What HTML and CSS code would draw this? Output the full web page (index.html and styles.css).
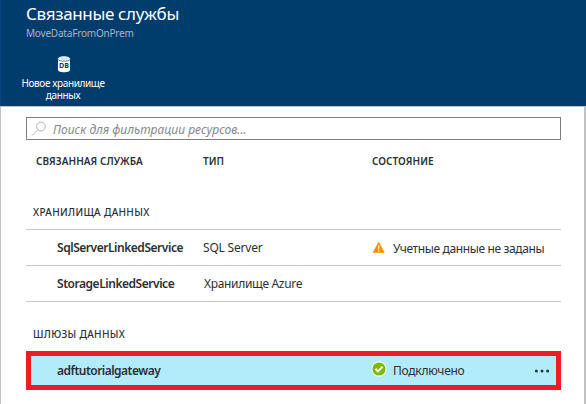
FILE: index.html
```
<!DOCTYPE html>
<html lang="ru">
<head>
<meta charset="utf-8">
<title>Связанные службы</title>
<link rel="stylesheet" href="styles.css">
</head>
<body>
<header class="header">
  <h1 class="title">Связанные службы</h1>
  <div class="subtitle">MoveDataFromOnPrem</div>
  <div class="command">
    <svg class="db" width="14" height="17" viewBox="0 0 14 17"><path d="M1 3v11c0 3 12 3 12 0V3z" fill="#fff"/><ellipse cx="7" cy="2.8" rx="5.7" ry="2" fill="#dce5ee" stroke="#fff"/><path d="M1 3.5c1 2.2 11 2.2 12 0" fill="none" stroke="#4c779c" stroke-width=".9"/><text x="7" y="11.8" text-anchor="middle" class="db-text">DB</text></svg>
    <div class="label">Новое хранилище<br>данных</div>
  </div>
</header>
<main class="panel">
  <div class="search">
    <svg width="16" height="16" viewBox="0 0 16 16" fill="none" stroke="#b4b4b4"><circle cx="10" cy="5.5" r="4.4"/><path d="M6.8 8.7 1 14.5"/></svg>
    <span class="placeholder">Поиск для фильтрации ресурсов...</span>
  </div>
  <div class="row head">
    <span class="h-service">СВЯЗАННАЯ СЛУЖБА</span><span class="h-type">ТИП</span><span class="h-state">СОСТОЯНИЕ</span>
  </div>
  <h2 class="section stores"><span>ХРАНИЛИЩА ДАННЫХ</span></h2>
  <div class="row item">
    <span class="name n-sql">SqlServerLinkedService</span><span class="t-sql">SQL Server</span>
    <span class="state"><svg width="14" height="14" viewBox="0 0 14 14"><path d="M6.7 1.2 12.2 11.5H1.1z" fill="#ff8c00" stroke="#ff8c00" stroke-width=".6" stroke-linejoin="round"/><path d="M6.7 4.5v3.8M6.7 9.2v1.4" stroke="#fff" stroke-width="1.3"/></svg><span class="s-warn">Учетные данные не заданы</span></span>
  </div>
  <div class="row item last">
    <span class="name n-storage">StorageLinkedService</span><span class="t-storage">Хранилище Azure</span>
  </div>
  <h2 class="section gateways"><span>ШЛЮЗЫ ДАННЫХ</span></h2>
  <div class="row selected">
    <span class="name n-gateway">adftutorialgateway</span><span></span>
    <span class="state"><svg class="ok" width="16" height="16" viewBox="0 0 16 16"><circle cx="8" cy="8" r="7.1" fill="#7fba00" stroke="#f3fbea" stroke-width="1.1"/><path d="m4.4 7.8 2.5 2.6 4.6-4.8" fill="none" stroke="#fff" stroke-width="2"/></svg><span class="s-ok">Подключено</span></span>
    <svg class="more" width="16" height="4" viewBox="0 0 16 4" fill="#28353c"><circle cx="2.4" cy="2" r="1.5"/><circle cx="8" cy="2" r="1.5"/><circle cx="13.6" cy="2" r="1.5"/></svg>
  </div>
</main>
</body>
</html>
```
FILE: styles.css
```
* { box-sizing: border-box; }
body { margin: 0; width: 586px; height: 404px; overflow: hidden; font: 13px/18px "Noto Sans", "Open Sans", sans-serif; color: #2b3036; background: #fff; }
span, h1, h2 { white-space: nowrap; }
.header { height: 106px; padding: 1px 0 0 25px; border-left: 1px solid #00457c; background: #003c6c; color: #fff; }
.title { margin: 0; font-size: 17px; line-height: 26px; font-weight: 400; letter-spacing: -.35px; }
.subtitle { font-size: 10px; line-height: 12px; letter-spacing: -.2px; color: #a9b6c6; }
.command { display: flex; flex-direction: column; align-items: center; width: 84px; margin: 17px 0 0 -5px; }
.db { margin: 0 0 4px 2px; }
.db-text { font: bold 7px "Open Sans", sans-serif; fill: #003c6c; }
.label { font-size: 10px; line-height: 12px; letter-spacing: -.37px; text-align: center; white-space: nowrap; }
.panel { height: 298px; padding: 10px 23px 0 25px; border: solid #c1c1c1; border-width: 1px 2px 0 1px; }
.search { display: flex; align-items: center; height: 23px; padding-left: 4px; border: 1px solid #7d7f83; }
.placeholder { margin-left: 6px; padding-top: 2px; font-size: 12px; font-style: italic; letter-spacing: .03px; color: #85878b; }
.row { display: grid; grid-template-columns: 177px 169px 1fr auto; align-items: center; }
.head { height: 43px; padding-bottom: 2px; font-size: 10px; font-weight: 600; letter-spacing: .05px; }
.h-service { padding-left: 10px; }
.section { display: flex; align-items: center; margin: 0; padding-left: 7px; font-size: 10px; font-weight: 500; letter-spacing: .32px; }
.stores { height: 46px; padding-top: 12px; }
.item { height: 36px; border-top: 1px solid #c8c8c8; }
.last { height: 37px; border-bottom: 1px solid #c8c8c8; }
.item, .selected { font-size: 12px; }
.name { padding-left: 31px; font-weight: 600; letter-spacing: -.46px; }
.t-sql { letter-spacing: -.2px; }
.t-storage { padding-left: 1px; letter-spacing: -.33px; }
.state { display: flex; align-items: center; }
.state svg { flex: none; }
.s-warn { margin-left: 7px; padding-top: 2px; letter-spacing: -.37px; }
.gateways { height: 49px; padding-top: 15px; }
.selected { height: 39px; border: 5px solid #ed1c24; background: #b2ebf9; grid-template-columns: 172px 168px 1fr auto; }
.selected .name { padding-left: 26px; letter-spacing: -.52px; }
.ok { margin-bottom: 3px; }
.s-ok { margin-left: 6px; padding-top: 1px; letter-spacing: -.27px; }
.more { margin-right: 6px; }
```
